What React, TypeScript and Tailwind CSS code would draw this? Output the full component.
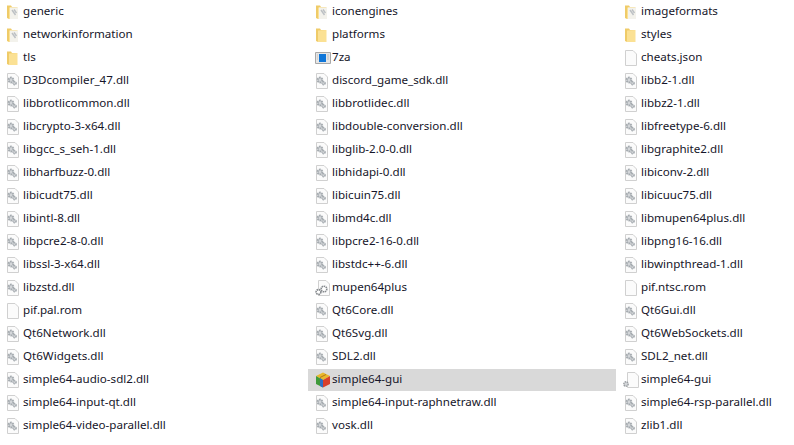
type Kind = "folder" | "folderDoc" | "dll" | "file" | "exe" | "gears" | "cube" | "fileGear";

const items: [string, Kind][] = [
  ["generic", "folderDoc"],
  ["networkinformation", "folderDoc"],
  ["tls", "folder"],
  ["D3Dcompiler_47.dll", "dll"],
  ["libbrotlicommon.dll", "dll"],
  ["libcrypto-3-x64.dll", "dll"],
  ["libgcc_s_seh-1.dll", "dll"],
  ["libharfbuzz-0.dll", "dll"],
  ["libicudt75.dll", "dll"],
  ["libintl-8.dll", "dll"],
  ["libpcre2-8-0.dll", "dll"],
  ["libssl-3-x64.dll", "dll"],
  ["libzstd.dll", "dll"],
  ["pif.pal.rom", "file"],
  ["Qt6Network.dll", "dll"],
  ["Qt6Widgets.dll", "dll"],
  ["simple64-audio-sdl2.dll", "dll"],
  ["simple64-input-qt.dll", "dll"],
  ["simple64-video-parallel.dll", "dll"],
  ["iconengines", "folderDoc"],
  ["platforms", "folder"],
  ["7za", "exe"],
  ["discord_game_sdk.dll", "dll"],
  ["libbrotlidec.dll", "dll"],
  ["libdouble-conversion.dll", "dll"],
  ["libglib-2.0-0.dll", "dll"],
  ["libhidapi-0.dll", "dll"],
  ["libicuin75.dll", "dll"],
  ["libmd4c.dll", "dll"],
  ["libpcre2-16-0.dll", "dll"],
  ["libstdc++-6.dll", "dll"],
  ["mupen64plus", "gears"],
  ["Qt6Core.dll", "dll"],
  ["Qt6Svg.dll", "dll"],
  ["SDL2.dll", "dll"],
  ["simple64-gui", "cube"],
  ["simple64-input-raphnetraw.dll", "dll"],
  ["vosk.dll", "dll"],
  ["imageformats", "folderDoc"],
  ["styles", "folder"],
  ["cheats.json", "file"],
  ["libb2-1.dll", "dll"],
  ["libbz2-1.dll", "dll"],
  ["libfreetype-6.dll", "dll"],
  ["libgraphite2.dll", "dll"],
  ["libiconv-2.dll", "dll"],
  ["libicuuc75.dll", "dll"],
  ["libmupen64plus.dll", "dll"],
  ["libpng16-16.dll", "dll"],
  ["libwinpthread-1.dll", "dll"],
  ["pif.ntsc.rom", "file"],
  ["Qt6Gui.dll", "dll"],
  ["Qt6WebSockets.dll", "dll"],
  ["SDL2_net.dll", "dll"],
  ["simple64-gui", "fileGear"],
  ["simple64-rsp-parallel.dll", "dll"],
  ["zlib1.dll", "dll"],
];

const Sheet = () => (
  <path d="M1.5 .5H9L12.5 4V15.5H1.5Z" fill="#fbfbfb" stroke="#d0d0d0" />
);

const Gear = ({ x, y, color = "#a4aaaf" }: { x: number; y: number; color?: string }) => (
  <g transform={`translate(${x} ${y})`}>
    <circle cx="0" cy="0" r="2.4" fill="#d3d6d9" stroke={color} strokeWidth="2" strokeDasharray="1.6 .7" />
    <circle cx="3.6" cy="3.2" r="1.5" fill="#d3d6d9" stroke={color} strokeWidth="1.5" strokeDasharray="1.3 .6" />
  </g>
);

const FileIcon = ({ kind }: { kind: Kind }) => {
  if (kind === "folder" || kind === "folderDoc") {
    return (
      <svg width="16" height="16" viewBox="0 0 16 16">
        <path d="M1 1.5H5L6 3H11V15H3L1 14Z" fill="#efcb68" />
        <path d="M3 3.5L11.5 3V15H3Z" fill="#fbe194" />
        {kind === "folderDoc" && (
          <>
            <path d="M4 3.5H12V15H4Z" fill="#f3f2ec" />
            <path d="M6 6L9.5 11M8 5.5L10.5 9" stroke="#bcc0c4" strokeWidth="1.4" />
          </>
        )}
      </svg>
    );
  }
  if (kind === "exe") {
    return (
      <svg width="16" height="16" viewBox="0 0 16 16">
        <path d="M.5 2.5H15.5V13.5H.5Z" fill="#e6e6e6" stroke="#a8a8a8" />
        <path d="M4 4H11V12H4Z" fill="#0f76d8" />
        <path d="M2 5H3M2 7H3M2 9H3M12 5H14M12 7H14M12 9H14" stroke="#bdbdbd" />
      </svg>
    );
  }
  if (kind === "cube") {
    return (
      <svg width="16" height="16" viewBox="0 0 16 16">
        <path d="M8 .5L15 4L8 8L1 4Z" fill="#e9b82c" />
        <path d="M1 4L8 8V15.5L1 12Z" fill="#3f9a3a" />
        <path d="M8 8L15 4V12L8 15.5Z" fill="#d8402c" />
        <path d="M5 6L8 8V15.5L5 14Z" fill="#2f6fc4" />
        <path d="M11 2.5L5 5.5" stroke="#b4761c" />
      </svg>
    );
  }
  if (kind === "gears") {
    return (
      <svg width="16" height="16" viewBox="0 0 16 16">
        <g transform="translate(2 0)">
          <Sheet />
        </g>
        <circle cx="3.5" cy="12" r="2.4" fill="#fff" stroke="#85898d" strokeWidth="1.6" strokeDasharray="1.5 .6" />
        <circle cx="9" cy="9" r="2.8" fill="#fff" stroke="#85898d" strokeWidth="1.6" strokeDasharray="1.5 .6" />
      </svg>
    );
  }
  if (kind === "fileGear") {
    return (
      <svg width="16" height="16" viewBox="0 0 16 16" className="overflow-visible">
        <g transform="translate(2 0)">
          <Sheet />
        </g>
        <circle cx="2" cy="12" r="2.2" fill="#d3d6d9" stroke="#9a9ea2" strokeWidth="1.4" strokeDasharray="1.4 .6" />
      </svg>
    );
  }
  return (
    <svg width="16" height="16" viewBox="0 0 16 16">
      <Sheet />
      {kind === "dll" && <Gear x={5} y={7} />}
    </svg>
  );
};

const Row = ({ name, kind }: { name: string; kind: Kind }) => (
  <div className="flex h-[23px] items-center">
    <div
      className={`flex h-[22px] w-full items-center pl-[7px] ${
        kind === "cube" ? "bg-[#d9d9d9]" : ""
      }`}
    >
      <FileIcon kind={kind} />
      <span className="mb-[2px] ml-px whitespace-nowrap">{name}</span>
    </div>
  </div>
);

export default function App() {
  return (
    <div className="h-[445px] w-[794px] overflow-hidden bg-white">
      <div
        className="-ml-px grid grid-flow-col grid-cols-[309px_309px_177px] grid-rows-[repeat(19,23px)] text-[11.6px] text-[#16162a]"
        style={{ fontFamily: '"Noto Sans", "Noto Sans CJK KR", sans-serif' }}
      >
        {items.map(([name, kind], i) => (
          <div key={i} className={i >= 19 && i < 38 ? "w-[308px]" : ""}>
            <Row name={name} kind={kind} />
          </div>
        ))}
      </div>
    </div>
  );
}
